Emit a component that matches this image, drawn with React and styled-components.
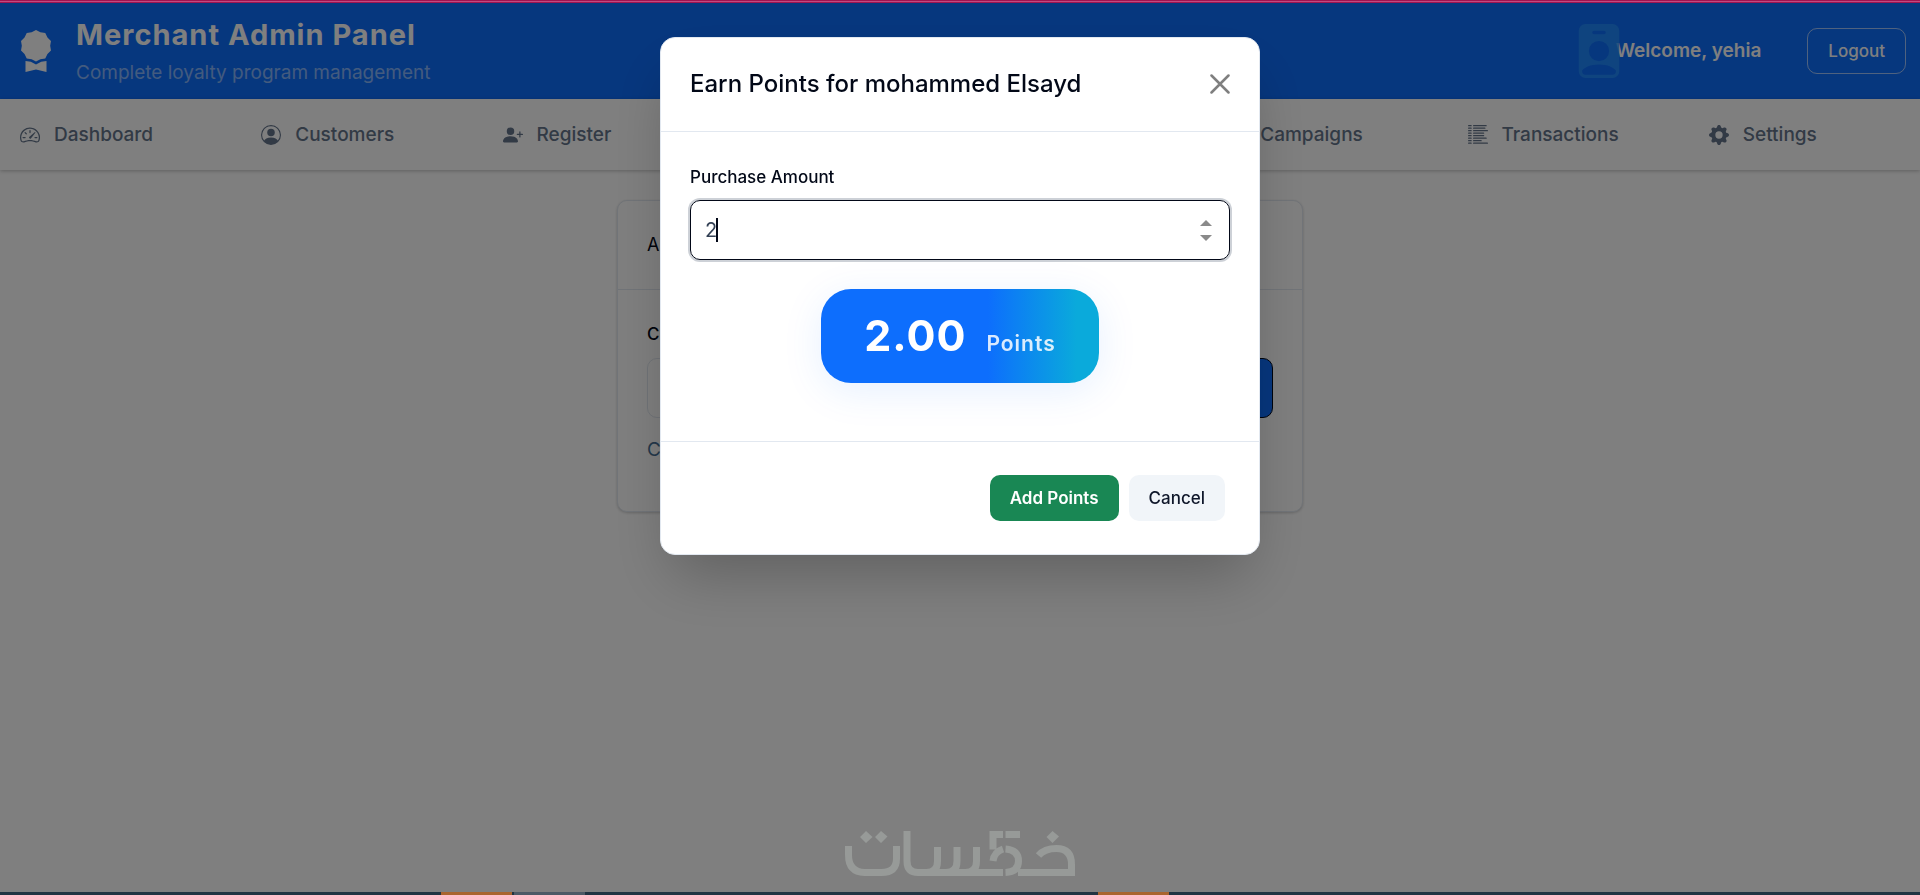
import React from 'react';
import styled, { createGlobalStyle } from 'styled-components';
import {
  BsAwardFill,
  BsCreditCardFill,
  BsGearFill,
  BsGiftFill,
  BsListColumnsReverse,
  BsMegaphoneFill,
  BsPersonBadgeFill,
  BsPersonCircle,
  BsPersonPlusFill,
  BsSpeedometer2,
} from 'react-icons/bs';

const GlobalStyle = createGlobalStyle`
  *, *::before, *::after { box-sizing: border-box; }
  body {
    margin: 0;
    background: #fff;
    color: #020817;
    font-family: Inter, "Liberation Sans", sans-serif;
    font-size: 16px;
    line-height: 24px;
  }
  button, input { font: inherit; }
  h1, h2, p { margin: 0; font-weight: inherit; }
`;

const Page = styled.div`
  display: flex;
  flex-direction: column;
  min-height: 100vh;
`;

const Header = styled.header`
  display: flex;
  align-items: center;
  justify-content: space-between;
  height: 96px;
  margin-top: 3px;
  padding: 0 14px;
  background: #0d6efd;
  color: #fff;
`;

const Brand = styled.div`
  display: flex;
  align-items: center;
  gap: 18px;

  svg { width: 44px; height: 42px; }
`;

const BrandTitle = styled.h1`
  padding-top: 4px;
  font-size: 29px;
  line-height: 40px;
  font-weight: 700;
  letter-spacing: 1px;
`;

const BrandTagline = styled.p`
  font-size: 19px;
  line-height: 36px;
  color: rgba(255, 255, 255, 0.5);
`;

const Account = styled.div`
  display: flex;
  align-items: center;
  font-size: 19px;
  font-weight: 600;

  svg { width: 54px; height: 54px; margin-right: -10px; color: #2490ff; opacity: 0.8; }
`;

const LogoutButton = styled.button`
  height: 46px;
  margin-left: 46px;
  padding: 0 20px;
  border: 1px solid rgba(255, 255, 255, 0.6);
  border-radius: 10px;
  background: transparent;
  color: #fff;
  font-size: 17px;
  font-weight: 500;
`;

const Nav = styled.nav`
  display: grid;
  grid-template-columns: repeat(8, 1fr);
  gap: 10px;
  height: 71px;
  background: #fff;
  box-shadow: 0 1px 4px rgba(0, 0, 0, 0.25);
`;

const NavLink = styled.a`
  display: flex;
  align-items: center;
  gap: 14px;
  padding-left: 20px;
  color: #64748b;
  font-size: 19px;
  font-weight: 500;
  text-decoration: none;

  svg { width: 20px; height: 20px; }
`;

const Card = styled.section`
  width: min(686px, 100%);
  margin: 30px auto 0;
  border: 1px solid #e2e8f0;
  border-radius: 10px;
  background: #fff;
  box-shadow: 0 1px 3px rgba(0, 0, 0, 0.2);
`;

const CardTitle = styled.h2`
  padding: 32px 29px;
  border-bottom: 1px solid #e2e8f0;
  font-size: 18px;
  line-height: 24px;
`;

const CardBody = styled.div`
  display: flex;
  flex-direction: column;
  height: 221px;
  padding: 31px 29px;
`;

const SearchLabel = styled.label`
  font-size: 17px;
  font-weight: 500;
  line-height: 27px;
`;

const SearchRow = styled.div`
  display: flex;
  gap: 10px;
  height: 60px;
  margin: 10px 0 20px;
`;

const SearchInput = styled.input`
  flex: 1;
  border: 1px solid #e2e8f0;
  border-radius: 10px;
`;

const SearchButton = styled.button`
  width: 120px;
  border: 1px solid #020817;
  border-radius: 10px;
  background: #0d6efd;
  color: #fff;
`;

const Hint = styled.p`
  color: #4a7297;
  font-size: 19px;
`;

const Overlay = styled.div`
  position: fixed;
  inset: 0;
  display: flex;
  align-items: flex-start;
  justify-content: center;
  padding-top: 37px;
  background: rgba(0, 0, 0, 0.5);
`;

const Dialog = styled.div`
  width: min(600px, 100%);
  border: 1px solid #e2e8f0;
  border-radius: 15px;
  background: #fff;
  box-shadow: 0 30px 60px -12px rgba(0, 0, 0, 0.25);
`;

const DialogHeader = styled.div`
  display: flex;
  align-items: center;
  justify-content: space-between;
  height: 94px;
  padding: 0 29px 2px;
  border-bottom: 1px solid #e2e8f0;
`;

const DialogTitle = styled.h2`
  font-size: 24px;
  line-height: 32px;
  font-weight: 500;
`;

const CloseButton = styled.button`
  display: flex;
  padding: 0;
  border: 0;
  background: none;
  color: #7f7f7f;
`;

const DialogBody = styled.div`
  display: flex;
  flex-direction: column;
  height: 309px;
  padding: 33px 29px 0;
`;

const FieldLabel = styled.label`
  font-size: 17px;
  font-weight: 500;
  line-height: 24px;
`;

const AmountField = styled.div`
  display: flex;
  align-items: center;
  height: 60px;
  margin: 11px 0 29px;
  padding: 0 17px 0 14px;
  border: 1px solid #020817;
  border-radius: 10px;
  box-shadow: 0 0 0 2px #cdd1d7;
`;

const AmountInput = styled.input`
  width: 11px;
  padding: 0;
  border: 0;
  outline: 0;
  background: none;
  color: #334155;
  font-size: 20px;
  appearance: textfield;
  caret-color: transparent;

  &::-webkit-inner-spin-button { display: none; }
`;

const Caret = styled.span`
  width: 2px;
  height: 24px;
  background: #020817;
`;

const Stepper = styled.div`
  display: flex;
  flex-direction: column;
  gap: 9px;
  margin-left: auto;
`;

const StepButton = styled.button`
  display: flex;
  padding: 0;
  border: 0;
  background: none;
  color: #8a8a8a;
`;

const PointsBadge = styled.output`
  display: flex;
  align-items: baseline;
  align-self: center;
  gap: 20px;
  height: 94px;
  padding: 0 43px;
  border-radius: 30px;
  background: linear-gradient(90deg, #0d6efd 60%, #0aaadb 92%);
  box-shadow: 0 8px 40px rgba(13, 110, 253, 0.1);
  color: #fff;
  letter-spacing: 1px;
  line-height: 92px;
`;

const PointsValue = styled.span`
  font-size: 43px;
  font-weight: 700;
`;

const PointsUnit = styled.span`
  color: rgba(255, 255, 255, 0.85);
  font-size: 21px;
  font-weight: 600;
`;

const DialogFooter = styled.div`
  display: flex;
  align-items: center;
  justify-content: flex-end;
  gap: 10px;
  height: 113px;
  padding: 0 34px;
  border-top: 1px solid #e2e8f0;
`;

const DialogButton = styled.button`
  height: 46px;
  padding: 0 20px;
  border: 0;
  border-radius: 10px;
  background: ${({ $primary }) => ($primary ? '#198754' : '#f1f5f9')};
  color: ${({ $primary }) => ($primary ? '#fff' : '#0f172a')};
  font-size: 17px;
  font-weight: ${({ $primary }) => ($primary ? 600 : 500)};
`;

const TopStrip = styled.div`
  position: fixed;
  inset: 0 0 auto;
  height: 3px;
  border: solid #a01450;
  border-width: 1px 0;
  background: #c24a80;
`;

const Taskbar = styled.div`
  position: fixed;
  inset: auto 0 0;
  display: flex;
  height: 3px;
  background: #213442;
`;

const TaskbarItem = styled.span`
  width: 71px;
  margin-left: ${({ $gap }) => $gap}px;
  background: ${({ $color }) => $color};
`;

const Watermark = styled.div`
  position: fixed;
  inset: auto 0 18px;
  display: flex;
  justify-content: center;
`;

const navItems = [
  ['Dashboard', BsSpeedometer2],
  ['Customers', BsPersonCircle],
  ['Register', BsPersonPlusFill],
  ['Cards', BsCreditCardFill],
  ['Rewards', BsGiftFill],
  ['Campaigns', BsMegaphoneFill],
  ['Transactions', BsListColumnsReverse],
  ['Settings', BsGearFill],
];

function KhamsatLogo() {
  return (
    <svg width="230" height="46" viewBox="0 0 230 46" role="img" aria-label="خمسات" fill="none" stroke="#979a98" strokeWidth="7">
      <path d="M3.500 15v9q0 17 16 17.500h17q15 0 15-14V15" />
      <path d="M62 0v30q0 11.500 11 11.500h85M92.500 16v14q0 11.500-11 11.500M112 16v14q0 11.500-11 11.500M131.500 16v14q0 11.500-11 11.500" />
      <path d="M158 3.500h-10v15M160.500 3.500H175M148 30q1-9 10-12M160.500 18q13 1 13 12 0 11-13 11.500" />
      <path d="M173 41.500h53.500v-8q0-16-15-16-12 0-18 7" />
      <g fill="#979a98" stroke="none">
        <path d="M21 0l6.500 6-6.500 6-6-6zM36 0l6.500 5.500L36 12l-6-6zM207.500 0l6.500 5.500-6.500 6.500-6-6z" />
      </g>
    </svg>
  );
}

export default function App() {
  return (
    <>
      <GlobalStyle />
      <Page>
        <Header>
          <Brand>
            <BsAwardFill />
            <div>
              <BrandTitle>Merchant Admin Panel</BrandTitle>
              <BrandTagline>Complete loyalty program management</BrandTagline>
            </div>
          </Brand>
          <Account>
            <BsPersonBadgeFill />
            <span>Welcome, yehia</span>
            <LogoutButton type="button">Logout</LogoutButton>
          </Account>
        </Header>
        <Nav>
          {navItems.map(([label, Icon]) => (
            <NavLink key={label} href={`#${label.toLowerCase()}`}>
              <Icon />
              {label}
            </NavLink>
          ))}
        </Nav>
        <main>
          <Card>
            <CardTitle>Add Points</CardTitle>
            <CardBody>
              <SearchLabel htmlFor="customer">Customer</SearchLabel>
              <SearchRow>
                <SearchInput id="customer" type="text" />
                <SearchButton type="button">Find</SearchButton>
              </SearchRow>
              <Hint>Customer found</Hint>
            </CardBody>
          </Card>
        </main>
      </Page>
      <Overlay>
        <Dialog role="dialog" aria-modal="true" aria-labelledby="dialog-title">
          <DialogHeader>
            <DialogTitle id="dialog-title">Earn Points for mohammed Elsayd</DialogTitle>
            <CloseButton type="button" aria-label="Close">
              <svg width="20" height="20" viewBox="0 0 20 20" fill="none" stroke="currentColor" strokeWidth="2.500" strokeLinecap="round">
                <path d="M1.500 1.500l17 17M18.500 1.500l-17 17" />
              </svg>
            </CloseButton>
          </DialogHeader>
          <DialogBody>
            <FieldLabel htmlFor="amount">Purchase Amount</FieldLabel>
            <AmountField>
              <AmountInput id="amount" type="number" defaultValue="2" />
              <Caret />
              <Stepper>
                <StepButton type="button" aria-label="Increase">
                  <svg width="12" height="6" viewBox="0 0 12 6" fill="currentColor"><path d="M6 0l6 6H0z" /></svg>
                </StepButton>
                <StepButton type="button" aria-label="Decrease">
                  <svg width="12" height="6" viewBox="0 0 12 6" fill="currentColor"><path d="M0 0h12L6 6z" /></svg>
                </StepButton>
              </Stepper>
            </AmountField>
            <PointsBadge htmlFor="amount">
              <PointsValue>2.00</PointsValue>
              <PointsUnit>Points</PointsUnit>
            </PointsBadge>
          </DialogBody>
          <DialogFooter>
            <DialogButton type="button" $primary>Add Points</DialogButton>
            <DialogButton type="button">Cancel</DialogButton>
          </DialogFooter>
        </Dialog>
      </Overlay>
      <TopStrip />
      <Watermark><KhamsatLogo /></Watermark>
      <Taskbar>
        <TaskbarItem $gap={441} $color="#a9652f" />
        <TaskbarItem $gap={2} $color="#4d5a66" />
        <TaskbarItem $gap={513} $color="#a9652f" />
      </Taskbar>
    </>
  );
}
